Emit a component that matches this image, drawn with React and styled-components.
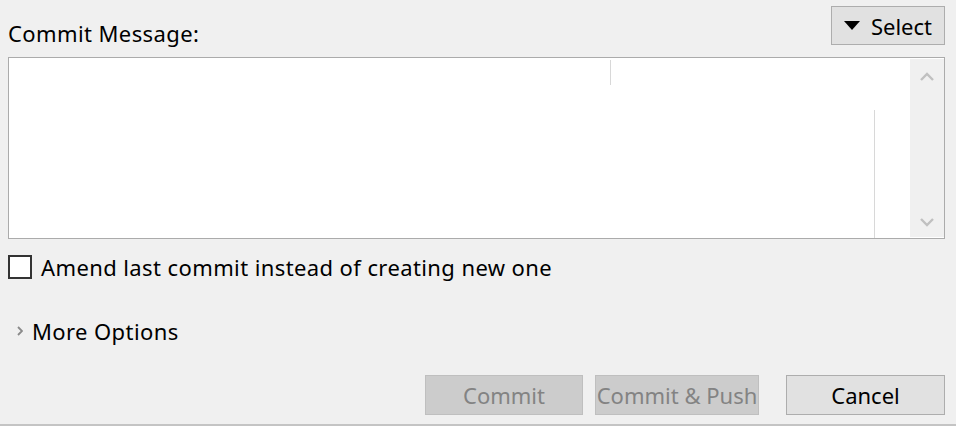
import React from 'react';
import styled, { createGlobalStyle } from 'styled-components';

const GlobalStyle = createGlobalStyle`
  html, body {
    margin: 0;
    padding: 0;
    background: #f0f0f0;
  }
  body {
    font-family: "Noto Sans", "Open Sans", sans-serif;
    color: #000;
  }
`;

const Dialog = styled.div`
  width: 956px;
  height: 426px;
  box-sizing: border-box;
  padding: 6px 11px 0 8px;
  display: flex;
  flex-direction: column;
  border-bottom: 2px solid #c4c4c4;
  font-size: 22px;
  letter-spacing: 0.4px;
`;

const HeaderRow = styled.div`
  display: flex;
  justify-content: space-between;
  align-items: flex-start;
  height: 51px;
`;

const Label = styled.div`
  line-height: 26px;
  margin-top: 14px;
`;

const Button = styled.button`
  box-sizing: border-box;
  height: ${(p) => p.$h || 40}px;
  width: ${(p) => p.$w}px;
  margin-left: ${(p) => p.$gap || 0}px;
  background: ${(p) => (p.disabled ? '#cccccc' : '#e1e1e1')};
  border: 1px solid ${(p) => (p.disabled ? '#bfbfbf' : '#adadad')};
  color: ${(p) => (p.disabled ? '#838383' : '#000')};
  font-family: inherit;
  font-size: 22px;
  letter-spacing: 0;
  white-space: nowrap;
  padding: 0;
  display: flex;
  align-items: center;
  justify-content: center;
  gap: 11px;
`;

const Editor = styled.div`
  box-sizing: border-box;
  height: 182px;
  border: 1px solid #ababab;
  background: #fff;
  display: flex;
`;

const TextArea = styled.div`
  flex: 1;
  position: relative;
`;

const Guide = styled.div`
  position: absolute;
  width: 1px;
  background: #d8d8d8;
  left: ${(p) => p.$x}px;
  top: ${(p) => p.$top}px;
  bottom: ${(p) => p.$bottom}px;
`;

const ScrollBar = styled.div`
  width: 34px;
  margin: 1px 0;
  background: #f0f0f0;
  display: flex;
  flex-direction: column;
  justify-content: space-between;
  align-items: center;
  padding: 13px 0 10px;
`;

const CheckRow = styled.label`
  display: flex;
  align-items: center;
  gap: 9px;
  margin-top: 14px;
  line-height: 28px;
`;

const Box = styled.span`
  box-sizing: border-box;
  width: 24px;
  height: 24px;
  border: 2px solid #333;
  background: #fff;
`;

const Expander = styled.div`
  display: flex;
  align-items: center;
  gap: 9px;
  margin-top: 36px;
  padding-left: 9px;
  line-height: 28px;
`;

const Footer = styled.div`
  margin-top: auto;
  margin-bottom: 9px;
  display: flex;
  justify-content: flex-end;
  gap: 12px;
`;

const Chevron = ({ up }) => (
  <svg width="14" height="9" viewBox="0 0 14 9">
    <path
      d={up ? 'M1 8 L7 2 L13 8' : 'M1 1 L7 7 L13 1'}
      fill="none"
      stroke="#c0c0c0"
      strokeWidth="2.4"
    />
  </svg>
);

export default function App() {
  return (
    <>
      <GlobalStyle />
      <Dialog>
        <HeaderRow>
          <Label>Commit Message:</Label>
          <Button $w={114} $h={39}>
            <svg width="16" height="9" viewBox="0 0 16 9">
              <path d="M0 0 H16 L8 9 Z" fill="#000" />
            </svg>
            Select
          </Button>
        </HeaderRow>
        <Editor>
          <TextArea>
            <Guide $x={601} $top={2} $bottom={153} />
            <Guide $x={865} $top={52} $bottom={0} />
          </TextArea>
          <ScrollBar>
            <Chevron up />
            <Chevron />
          </ScrollBar>
        </Editor>
        <CheckRow>
          <Box />
          Amend last commit instead of creating new one
        </CheckRow>
        <Expander>
          <svg width="6" height="10" viewBox="0 0 6 10">
            <path d="M1 1 L5 5 L1 9" fill="none" stroke="#8a8a8a" strokeWidth="1.8" />
          </svg>
          More Options
        </Expander>
        <Footer>
          <Button $w={158} disabled>Commit</Button>
          <Button $w={164} disabled>Commit &amp; Push</Button>
          <Button $w={159} $gap={15}>Cancel</Button>
        </Footer>
      </Dialog>
    </>
  );
}
